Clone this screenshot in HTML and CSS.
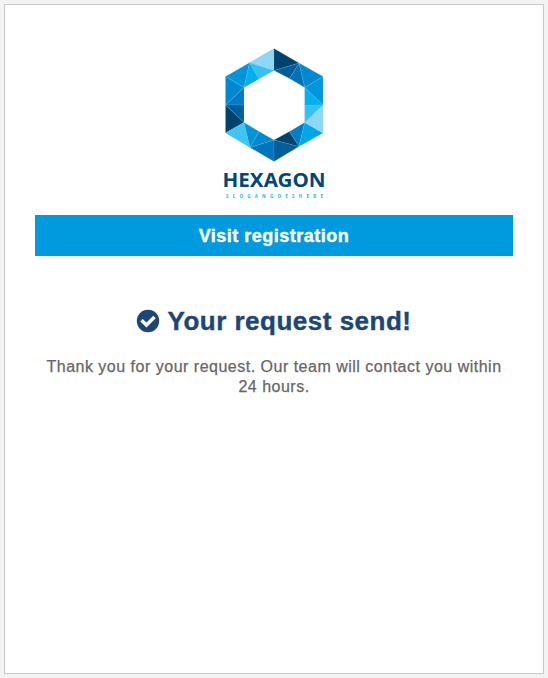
FILE: index.html
```
<!DOCTYPE html>
<html lang="en">
<head>
<meta charset="utf-8">
<title>Visit registration</title>
<link rel="stylesheet" href="styles.css">
</head>
<body>
<main class="panel">
  <svg class="logo" viewBox="214 40 120 165" role="img" aria-label="Hexagon">
    <g class="facets">
      <path fill="#8ed8f3" d="M274 48.5V70.5L249.500 62.700Z"/>
      <path fill="#36c2ef" d="M249.500 62.700L274 70.500L259 79Z"/>
      <path fill="#00b1eb" d="M249.500 62.700L259 79L244 87.500Z"/>
      <path fill="#0095db" d="M249.500 62.700L244 87.500L225.500 76.500Z"/>
      <path fill="#0089d0" d="M225.500 76.500L244 87.500L225.500 105Z"/>
      <path fill="#007bc4" d="M244 87.500V105H225.500Z"/>
      <path fill="#005e9a" d="M225.500 105H244V122.500Z"/>
      <path fill="#00426e" d="M225.500 105L244 122.500L225.500 133Z"/>
      <path fill="#3dc6f0" d="M225.500 133L244 122.500L250 147.500Z"/>
      <path fill="#0095d9" d="M244 122.500L259 131.500L250 147.500Z"/>
      <path fill="#0089d0" d="M259 131.500L274 140L250 147.500Z"/>
      <path fill="#0074bd" d="M250 147.500L274 140V161.500Z"/>
      <path fill="#005e9a" d="M274 140L299 146.500L274 161.500Z"/>
      <path fill="#00426e" d="M274 140L289.500 131.500L299 146.500Z"/>
      <path fill="#007fc5" d="M289.500 131.500L304.700 122.500L299 146.500Z"/>
      <path fill="#00a7e6" d="M304.700 122.500L323 133L299 146.500Z"/>
      <path fill="#8ed8f3" d="M304.700 122.500L323 105V133Z"/>
      <path fill="#36c2ef" d="M304.700 105H323L304.700 122.500Z"/>
      <path fill="#00b1eb" d="M304.700 87.500L323 105H304.700Z"/>
      <path fill="#0098dc" d="M304.700 87.500L323 76.500V105Z"/>
      <path fill="#0089d0" d="M299 63L323 76.500L304.700 87.500Z"/>
      <path fill="#0072b8" d="M299 63L304.700 87.500L289.500 78.500Z"/>
      <path fill="#005e9a" d="M299 63L289.500 78.500L274 70.500Z"/>
      <path fill="#00426e" d="M274 48.500L299 63L274 70.500Z"/>
    </g>
    <text class="brand" x="222.500" y="187" textLength="103" lengthAdjust="spacingAndGlyphs">HEXAGON</text>
    <text class="slogan" x="226" y="197.500" textLength="97">SLOGANGOESHERE</text>
  </svg>
  <header class="banner">Visit registration</header>
  <h1 class="title">
    <svg class="check" viewBox="0 0 24 24" aria-hidden="true">
      <circle cx="12" cy="12" r="11.200"/>
      <path d="M5.500 11.200L10.500 16L18.500 8"/>
    </svg>
    <span class="title-text">Your request send!</span>
  </h1>
  <p class="message">Thank you for your request. Our team will contact you within 24 hours.</p>
</main>
</body>
</html>
```

FILE: styles.css
```
* { box-sizing: border-box; }
body {
  margin: 0;
  padding: 4px;
  background: #f3f3f3;
  font-family: "Liberation Sans", Arial, sans-serif;
}
.panel {
  width: 540px;
  height: 670px;
  padding: 35px 30px 0;
  border: 1px solid #c8c8c8;
  background: #fff;
}
.logo {
  display: block;
  width: 120px;
  height: 165px;
  margin: 0 auto 10px;
}
.facets { stroke: #7fc4ea; stroke-width: .2; }
.brand { font: 700 19px "Noto Sans", sans-serif; fill: #00477a; }
.slogan { font: 700 4.500px "Noto Sans", sans-serif; fill: #22b5e8; }
.banner {
  height: 41px;
  background: #009ade;
  color: #fff;
  font-size: 18px;
  font-weight: 700;
  line-height: 42px;
  letter-spacing: .5px;
  text-align: center;
  -webkit-text-stroke: .4px #fff;
}
.title {
  display: flex;
  align-items: center;
  justify-content: center;
  gap: 7px;
  height: 32px;
  margin: 49px 0 0;
  color: #1d4677;
  font-size: 26px;
  line-height: 32px;
  letter-spacing: .5px;
  white-space: nowrap;
  -webkit-text-stroke: .4px #1d4677;
}
.check { width: 24px; height: 24px; fill: #1d4677; }
.check path { fill: none; stroke: #fff; stroke-width: 3.500; }
.message {
  margin: 20px 0 0;
  color: #666;
  font-size: 16px;
  line-height: 20px;
  letter-spacing: .5px;
  text-align: center;
  -webkit-text-stroke: .25px #666;
}
```
